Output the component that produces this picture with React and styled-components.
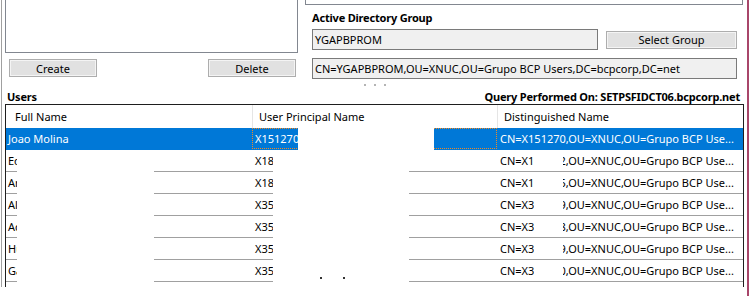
import React from 'react'
import styled, { createGlobalStyle } from 'styled-components'

const GlobalStyle = createGlobalStyle`
  html, body {
    margin: 0;
    background: #fff;
  }
  body {
    font-family: "Noto Sans", "Segoe UI", sans-serif;
    font-size: 11px;
    color: #000;
  }
`

const users = [
  { name: 'Joao Molina', upn: 'X151270', dn: 'CN=X151270,OU=XNUC,OU=Grupo BCP Use...', selected: true },
  { name: 'Eduardo Paredes', upn: 'X181342', dn: 'CN=X181342,OU=XNUC,OU=Grupo BCP Use...' },
  { name: 'Ana Rojas', upn: 'X182215', dn: 'CN=X182215,OU=XNUC,OU=Grupo BCP Use...' },
  { name: 'Alberto Quispe', upn: 'X351109', dn: 'CN=X351109,OU=XNUC,OU=Grupo BCP Use...' },
  { name: 'Adriana Salas', upn: 'X352238', dn: 'CN=X352238,OU=XNUC,OU=Grupo BCP Use...' },
  { name: 'Hugo Torres', upn: 'X353309', dn: 'CN=X353309,OU=XNUC,OU=Grupo BCP Use...' },
  { name: 'Gabriel Vega', upn: 'X354410', dn: 'CN=X354410,OU=XNUC,OU=Grupo BCP Use...' },
  { name: '', upn: '', dn: '' },
]

function App() {
  return (
    <Window>
      <GlobalStyle />
      <Frame>
        <Top>
          <LeftPane>
            <ListBox />
            <ButtonRow>
              <Button $w={88}>Create</Button>
              <Button $w={88}>Delete</Button>
            </ButtonRow>
          </LeftPane>
          <RightPane>
            <TopBox />
            <Label $indent={7}>Active Directory Group</Label>
            <GroupRow>
              <TextBox $w={286}>YGAPBPROM</TextBox>
              <Button $w={131}>Select Group</Button>
            </GroupRow>
            <TextBox $w={425} $top={8}>CN=YGAPBPROM,OU=XNUC,OU=Grupo BCP Users,DC=bcpcorp,DC=net</TextBox>
          </RightPane>
        </Top>

        <Grip>
          <Dot /><Dot /><Dot />
        </Grip>

        <UsersBar>
          <Label>Users</Label>
          <Label>Query Performed On: SETPSFIDCT06.bcpcorp.net</Label>
        </UsersBar>

        <ListView>
          <HeaderRow>
            <HeadCell $pad={9}>Full Name</HeadCell>
            <HeadCell $pad={6} $sep>User Principal Name</HeadCell>
            <HeadCell $pad={6} $sep>Distinguished Name</HeadCell>
          </HeaderRow>
          {users.map((u, i) => (
            <Row key={i} $selected={u.selected}>
              <Cell>{u.name}</Cell>
              <Cell $focus={u.selected}>{u.upn}</Cell>
              <Cell>
                {u.dn}
                {!u.selected && u.dn && <DnMask />}
              </Cell>
            </Row>
          ))}
          <Mask style={{ left: 292, top: 23, width: 136, height: 22 }} />
          <Mask style={{ left: 11, top: 45, width: 137, height: 133 }} />
          <Mask style={{ left: 267, top: 45, width: 136, height: 133 }}>
            <Speck style={{ left: 47, top: 127 }} />
            <Speck style={{ left: 70, top: 127 }} />
          </Mask>
        </ListView>
      </Frame>
      <Gap />
      <EdgeLine />
    </Window>
  )
}

export default App

const Window = styled.div`
  width: 751px;
  height: 296px;
  display: flex;
  overflow: hidden;
  background: #fff;
  padding-left: 1px;
  box-sizing: border-box;
`

const Frame = styled.div`
  width: 745px;
  height: 287px;
  border-left: 1px solid #a0a0a0;
  box-sizing: border-box;
  display: flex;
  flex-direction: column;
  overflow: hidden;
`

const Gap = styled.div`
  width: 1px;
`

const EdgeLine = styled.div`
  width: 2px;
  height: 296px;
  background: #a8466a;
`

const Top = styled.div`
  display: flex;
  padding-left: 3px;
`

const LeftPane = styled.div`
  width: 293px;
  display: flex;
  flex-direction: column;
`

const ListBox = styled.div`
  height: 53px;
  border: 1px solid #828790;
  border-top: none;
  box-sizing: border-box;
  background: #fff;
`

const ButtonRow = styled.div`
  display: flex;
  justify-content: space-between;
  margin-top: 6px;
  padding: 0 2px 0 4px;
`

const Button = styled.div`
  width: ${p => p.$w}px;
  height: 18px;
  box-sizing: border-box;
  background: #e1e1e1;
  border: 1px solid #adadad;
  box-shadow: inset 0 0 0 1px #f4f4f4;
  display: flex;
  align-items: center;
  justify-content: center;
  line-height: 1;
`

const RightPane = styled.div`
  width: 438px;
  margin-left: 7px;
  display: flex;
  flex-direction: column;
`

const TopBox = styled.div`
  height: 5px;
  border: 1px solid #828790;
  border-top: none;
  box-sizing: border-box;
  margin-bottom: 5px;
`

const Label = styled.div`
  font-weight: 700;
  line-height: 15px;
  letter-spacing: -0.2px;
  padding-left: ${p => p.$indent || 0}px;
  white-space: nowrap;
`

const GroupRow = styled.div`
  display: flex;
  align-items: center;
  gap: 8px;
  margin-top: 4px;
  padding-left: 7px;
`

const TextBox = styled.div`
  width: ${p => p.$w}px;
  height: 21px;
  box-sizing: border-box;
  background: #f0f0f0;
  border: 1px solid #7a7a7a;
  padding-left: 2px;
  display: flex;
  align-items: center;
  white-space: nowrap;
  margin-top: ${p => p.$top || 0}px;
  margin-left: ${p => (p.$top ? 7 : 0)}px;
`

const Grip = styled.div`
  display: flex;
  gap: 8px;
  height: 2px;
  margin: 5px 0 0 362px;
`

const Dot = styled.span`
  width: 2px;
  height: 2px;
  background: #b4b4b4;
`

const UsersBar = styled.div`
  display: flex;
  justify-content: space-between;
  margin-top: 3px;
  padding: 0 6px 0 5px;
  height: 15px;
`

const ListView = styled.div`
  position: relative;
  margin-left: 3px;
  width: 739px;
  flex: 1;
  border: 1px solid #1e1e1e;
  border-bottom: none;
  box-sizing: border-box;
  overflow: hidden;
`

const HeaderRow = styled.div`
  display: grid;
  grid-template-columns: 246px 245px 1fr;
  height: 23px;
`

const HeadCell = styled.div`
  display: flex;
  align-items: center;
  padding-left: ${p => p.$pad}px;
  border-left: ${p => (p.$sep ? '1px solid #e5e5e5' : 'none')};
  white-space: nowrap;
`

const Row = styled.div`
  display: grid;
  grid-template-columns: 246px 245px 1fr;
  height: 22px;
  box-sizing: border-box;
  border-bottom: 1px solid ${p => (p.$selected ? '#0078d7' : '#a0a0a0')};
  background: ${p => (p.$selected ? '#0078d7' : '#fff')};
  color: ${p => (p.$selected ? '#fff' : '#000')};
`

const Cell = styled.div`
  position: relative;
  display: flex;
  align-items: center;
  padding-left: 3px;
  white-space: nowrap;
  overflow: hidden;
  outline: ${p => (p.$focus ? '1px dotted #f08a24' : 'none')};
  outline-offset: -1px;
  &:first-child {
    padding-left: 2px;
  }
`

const Mask = styled.div`
  position: absolute;
  background: #fff;
`

const DnMask = styled.span`
  position: absolute;
  left: 37px;
  top: 2px;
  width: 29px;
  height: 17px;
  background: #fff;
`

const Speck = styled.span`
  position: absolute;
  width: 2px;
  height: 2px;
  background: #333;
`
